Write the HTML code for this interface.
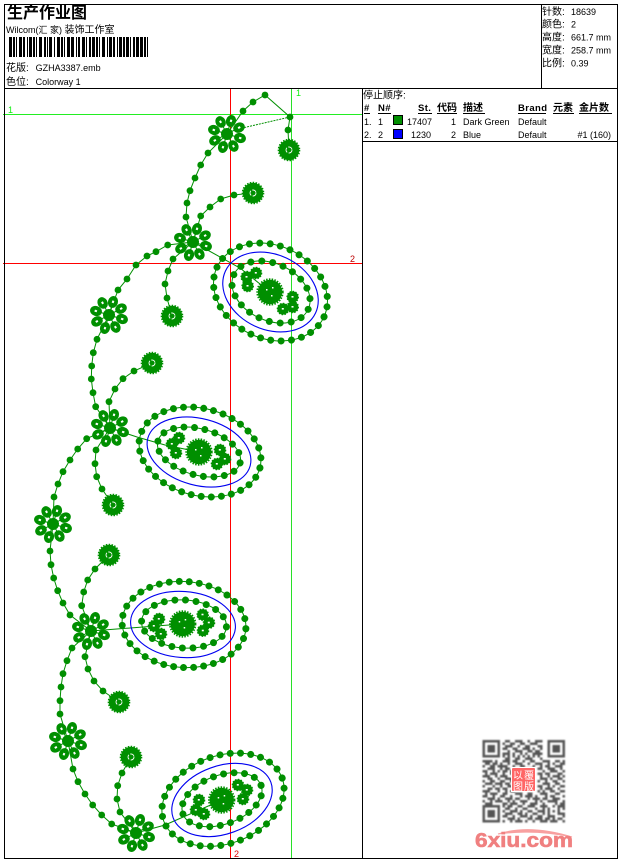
<!DOCTYPE html>
<html><head><meta charset="utf-8"><title>生产作业图</title>
<style>
html,body{margin:0;padding:0;background:#fff;width:620px;height:860px;overflow:hidden}
svg{display:block}
text{font-family:"Liberation Sans","WenQuanYi Zen Hei","Noto Sans CJK SC",sans-serif;font-size:9px;fill:#000}
.c{font-size:10px}
.b{font-weight:bold;font-size:10px}
.t{font-family:"Liberation Sans","Noto Sans CJK SC",sans-serif;font-size:16px;font-weight:bold}
.h{font-weight:bold;font-size:9.5px;letter-spacing:.4px}
</style></head><body>
<svg width="620" height="860" viewBox="0 0 620 860" xmlns="http://www.w3.org/2000/svg">
<defs>
<g id="d"><circle r="3.4" fill="#008f00"/></g>
<g id="bl"><circle r="5.6" fill="#008f00"/><circle r="5.8" fill="none" stroke="#008f00" stroke-width="1" stroke-dasharray="1.5 1.5"/><rect x="-1.2" y="-1" width="2" height="1.6" fill="#fff"/></g>
<g id="pm"><circle r="10.2" fill="#008f00"/><circle r="10.6" fill="none" stroke="#008f00" stroke-width="1.4" stroke-dasharray="1.5 1.4"/><circle r="3" fill="none" stroke="#fff" stroke-width=".9" stroke-dasharray="5 1.5"/></g>
<g id="cn"><circle r="12.2" fill="#008f00"/><circle r="12.8" fill="none" stroke="#008f00" stroke-width="1.8" stroke-dasharray="1.5 1.3"/><rect x="-4" y="-3" width="1.5" height="1.5" fill="#fff"/><rect x="2" y="-5" width="1.5" height="1.5" fill="#fff"/><rect x="1" y="3" width="1.5" height="1.5" fill="#fff"/></g>
<g id="p"><line x1="0" y1="0" x2="0" y2="-9" stroke="#008f00"/><ellipse cy="-13.6" rx="5" ry="6" fill="#008f00"/><rect x="-1" y="-15" width="2" height="2.4" fill="#fff"/></g>
<g id="f"><use href="#p" transform="rotate(17)"/><use href="#p" transform="rotate(62)"/><use href="#p" transform="rotate(107)"/><use href="#p" transform="rotate(152)"/><use href="#p" transform="rotate(197)"/><use href="#p" transform="rotate(242)"/><use href="#p" transform="rotate(287)"/><use href="#p" transform="rotate(332)"/><circle r="6" fill="#008f00"/></g>
<filter id="bq"><feGaussianBlur stdDeviation=".35"/></filter>
<filter id="bt"><feGaussianBlur stdDeviation=".3"/></filter>
</defs>

<!-- guides -->
<g shape-rendering="crispEdges">
<line x1="291.5" y1="89" x2="291.5" y2="858" stroke="#28e028"/>
<line x1="3" y1="114.5" x2="362" y2="114.5" stroke="#22ee22"/>
<line x1="3" y1="263.5" x2="362" y2="263.5" stroke="#f00"/>
<line x1="230.5" y1="89" x2="230.5" y2="858" stroke="#f00"/>
</g>
<text x="8" y="113" style="fill:#1e1">1</text>
<text x="296" y="96" style="fill:#1e1">1</text>
<text x="350" y="262" style="fill:#b00">2</text>
<text x="234" y="857" style="fill:#d00">2</text>

<!-- stems -->
<g fill="none" stroke="#008f00" stroke-width="1">
<path d="M227 134L208 153 200.7 165 195 178 190 190.7 187 203 186 217 193 242"/>
<path d="M193 242L200.7 216 210 207 220.7 199 234 195 252 193"/>
<path d="M193 242L167.7 245 156 251.7 147 256 136 265 127 279 118 290 109 315"/>
<path d="M193 242L173 259 168 271 165 284 167 298 172 316"/>
<path d="M227 134L243 111 253 102 265 95 290 117 288 130 289 150"/>
<path d="M290 117L238 129" stroke-dasharray="2 1"/>
<path d="M109 315L97 339.3 93.3 352.7 91.7 366 91.3 379 93 392.7 95.7 406.7 110 428"/>
<path d="M110 428L109 401.7 115 389 123 378.7 134 371 152 363"/>
<path d="M110 428L86.7 438.7 77.7 449 70 460 63 471.7 58 484 54 497 53 524"/>
<path d="M110 428L96 450 95 463.7 96.7 476.7 102 489 113 505"/>
<path d="M53 524L50 551 51 564.7 53.7 578 57.7 590.7 63 603 70 615 91 631"/>
<path d="M91 631L81.7 605.7 83.7 592 87.7 580 95 569 109 555"/>
<path d="M91 631L72 648 67 660.7 63 673.7 61 687 60 700.7 60 714 68 741"/>
<path d="M91 631L85 656.7 88 669 94 681 103 691 119 702"/>
<path d="M68 741L73 769 78 781.7 85 794 92.7 805 101.7 815 111.7 824 136 833"/>
<path d="M136 833L120 812 117 799 117.7 785.7 122 773 131 757"/>
<path d="M193 242L240 268 270 292"/>
<path d="M110 428L137 437 165 445 199 452"/>
<path d="M91 631L182 624"/>
<path d="M136 833L165 825 222 800"/>
</g>

<!-- ellipse rings -->
<g fill="none" stroke="#008f00" stroke-width="1">
<ellipse cx="270.5" cy="292" rx="59" ry="46.5" transform="rotate(25 270.5 292)"/>
<ellipse cx="271" cy="292" rx="41" ry="28.4" transform="rotate(25 271 292)"/>
<ellipse cx="200" cy="452" rx="62" ry="43.5" transform="rotate(15 200 452)"/>
<ellipse cx="199" cy="452" rx="42.5" ry="23.2" transform="rotate(15 199 452)"/>
<ellipse cx="184" cy="624.5" rx="62" ry="43" transform="rotate(4 184 624.5)"/>
<ellipse cx="184" cy="624" rx="42.5" ry="24" transform="rotate(4 184 624)"/>
<ellipse cx="223" cy="799.7" rx="63" ry="44" transform="rotate(-20 223 799.7)"/>
<ellipse cx="222" cy="799.7" rx="41.6" ry="24.4" transform="rotate(-20 222 799.7)"/>
</g>
<g fill="none" stroke="#008f00" stroke-width="7" stroke-linecap="round">
<ellipse pathLength="320" stroke-dasharray="0 10" cx="270.5" cy="292" rx="59" ry="46.5" transform="rotate(25 270.5 292)"/>
<ellipse pathLength="200" stroke-dasharray="0 10" cx="271" cy="292" rx="41" ry="28.4" transform="rotate(25 271 292)"/>
<ellipse pathLength="330" stroke-dasharray="0 10" cx="200" cy="452" rx="62" ry="43.5" transform="rotate(15 200 452)"/>
<ellipse pathLength="200" stroke-dasharray="0 10" cx="199" cy="452" rx="42.5" ry="23.2" transform="rotate(15 199 452)"/>
<ellipse pathLength="330" stroke-dasharray="0 10" cx="184" cy="624.5" rx="62" ry="43" transform="rotate(4 184 624.5)"/>
<ellipse pathLength="200" stroke-dasharray="0 10" cx="184" cy="624" rx="42.5" ry="24" transform="rotate(4 184 624)"/>
<ellipse pathLength="330" stroke-dasharray="0 10" cx="223" cy="799.7" rx="63" ry="44" transform="rotate(-20 223 799.7)"/>
<ellipse pathLength="200" stroke-dasharray="0 10" cx="222" cy="799.7" rx="41.6" ry="24.4" transform="rotate(-20 222 799.7)"/>
</g>

<!-- dots on stems -->
<g>
<use href="#d" x="265" y="95"/><use href="#d" x="253" y="102"/><use href="#d" x="243" y="111"/><use href="#d" x="290" y="117"/><use href="#d" x="288" y="130"/>
<use href="#d" x="208" y="153"/><use href="#d" x="200.7" y="165"/><use href="#d" x="195" y="178"/><use href="#d" x="190" y="190.7"/><use href="#d" x="187" y="203"/><use href="#d" x="186" y="217"/>
<use href="#d" x="200.7" y="216"/><use href="#d" x="210" y="207"/><use href="#d" x="220.7" y="199"/><use href="#d" x="234" y="195"/>
<use href="#d" x="167.7" y="245"/><use href="#d" x="156" y="251.7"/><use href="#d" x="147" y="256"/><use href="#d" x="136" y="265"/><use href="#d" x="127" y="279"/><use href="#d" x="118" y="290"/>
<use href="#d" x="173" y="259"/><use href="#d" x="168" y="271"/><use href="#d" x="165" y="284"/><use href="#d" x="167" y="298"/>
<use href="#d" x="97" y="339.3"/><use href="#d" x="93.3" y="352.7"/><use href="#d" x="91.7" y="366"/><use href="#d" x="91.3" y="379"/><use href="#d" x="93" y="392.7"/><use href="#d" x="95.7" y="406.7"/>
<use href="#d" x="109" y="401.7"/><use href="#d" x="115" y="389"/><use href="#d" x="123" y="378.7"/><use href="#d" x="134" y="371"/>
<use href="#d" x="86.7" y="438.7"/><use href="#d" x="77.7" y="449"/><use href="#d" x="70" y="460"/><use href="#d" x="63" y="471.7"/><use href="#d" x="58" y="484"/><use href="#d" x="54" y="497"/>
<use href="#d" x="96" y="450"/><use href="#d" x="95" y="463.7"/><use href="#d" x="96.7" y="476.7"/><use href="#d" x="102" y="489"/>
<use href="#d" x="50" y="551"/><use href="#d" x="51" y="564.7"/><use href="#d" x="53.7" y="578"/><use href="#d" x="57.7" y="590.7"/><use href="#d" x="63" y="603"/><use href="#d" x="70" y="615"/>
<use href="#d" x="81.7" y="605.7"/><use href="#d" x="83.7" y="592"/><use href="#d" x="87.7" y="580"/><use href="#d" x="95" y="569"/>
<use href="#d" x="72" y="648"/><use href="#d" x="67" y="660.7"/><use href="#d" x="63" y="673.7"/><use href="#d" x="61" y="687"/><use href="#d" x="60" y="700.7"/><use href="#d" x="60" y="714"/>
<use href="#d" x="85" y="656.7"/><use href="#d" x="88" y="669"/><use href="#d" x="94" y="681"/><use href="#d" x="103" y="691"/>
<use href="#d" x="73" y="769"/><use href="#d" x="78" y="781.7"/><use href="#d" x="85" y="794"/><use href="#d" x="92.7" y="805"/><use href="#d" x="101.7" y="815"/><use href="#d" x="111.7" y="824"/>
<use href="#d" x="120" y="812"/><use href="#d" x="117" y="799"/><use href="#d" x="117.7" y="785.7"/><use href="#d" x="122" y="773"/>
</g>

<!-- flowers -->
<use href="#f" transform="translate(227 134)"/>
<use href="#f" transform="translate(193 242)"/>
<use href="#f" transform="translate(109 315)"/>
<use href="#f" transform="translate(110 428)"/>
<use href="#f" transform="translate(53 524)"/>
<use href="#f" transform="translate(91 631)"/>
<use href="#f" transform="translate(68 741)"/>
<use href="#f" transform="translate(136 833)"/>

<!-- pom-poms -->
<use href="#pm" x="289" y="150"/><use href="#pm" x="253" y="193"/><use href="#pm" x="172" y="316"/><use href="#pm" x="152" y="363"/><use href="#pm" x="113" y="505"/><use href="#pm" x="109" y="555"/><use href="#pm" x="119" y="702"/><use href="#pm" x="131" y="757"/>

<!-- centres and blooms -->
<use href="#cn" x="270" y="292"/><use href="#cn" x="199" y="452"/><use href="#cn" x="182.7" y="624"/><use href="#cn" x="221.7" y="800"/>
<use href="#bl" x="246.7" y="277"/><use href="#bl" x="256" y="273"/><use href="#bl" x="247.7" y="286"/><use href="#bl" x="283" y="309"/><use href="#bl" x="292.7" y="297"/><use href="#bl" x="292.7" y="307"/>
<use href="#bl" x="179" y="438"/><use href="#bl" x="172" y="444"/><use href="#bl" x="176" y="453"/><use href="#bl" x="220" y="450"/><use href="#bl" x="225" y="459"/><use href="#bl" x="217" y="464"/>
<use href="#bl" x="159" y="619"/><use href="#bl" x="154" y="626"/><use href="#bl" x="161" y="634"/><use href="#bl" x="202.7" y="614.7"/><use href="#bl" x="209" y="622.7"/><use href="#bl" x="203" y="630.7"/>
<use href="#bl" x="199" y="800"/><use href="#bl" x="196" y="810"/><use href="#bl" x="204" y="814"/><use href="#bl" x="238" y="785"/><use href="#bl" x="247" y="790"/><use href="#bl" x="243" y="799"/>

<!-- blue ovals -->
<g fill="none" stroke="#0000f0" stroke-width="1.1">
<ellipse cx="270.5" cy="292" rx="49.7" ry="37.5" transform="rotate(25 270.5 292)"/>
<ellipse cx="199" cy="452" rx="53" ry="33.3" transform="rotate(15 199 452)"/>
<ellipse cx="183" cy="624.5" rx="52.5" ry="33" transform="rotate(4 183 624.5)"/>
<ellipse cx="222" cy="800" rx="52" ry="34" transform="rotate(-20 222 800)"/>
</g>

<!-- frame -->
<g stroke="#000" fill="none" shape-rendering="crispEdges">
<rect x="4.5" y="4.5" width="613" height="854"/>
<line x1="4" y1="88.5" x2="618" y2="88.5"/>
<line x1="541.5" y1="4" x2="541.5" y2="88"/>
<line x1="362.5" y1="88" x2="362.5" y2="859"/>
<line x1="362" y1="141.5" x2="618" y2="141.5"/>
</g>

<!-- header -->
<text class="t" x="7" y="18">生产作业图</text>
<text x="6" y="33">Wilcom(汇 家) <tspan class="c">装饰工作室</tspan></text>
<line x1="9" y1="47" x2="150" y2="47" stroke="#000" stroke-width="20" stroke-dasharray="3 1 2 1 1 2 3 1 2 2 1 1 3 1 2 1 1 2 3 2 2 1 1 1 3 2 1 2 3 1 2 1 1 2 3 1 3 2 1 1 2 2 3 1 1 2 2 1 3 1 2 1 1 2 3 2 1 1 3 1 2 2 1 1 3 1 2 1 3 1 1 2 2 1 3 1" shape-rendering="crispEdges"/>
<text class="c" x="6" y="71">花版:</text><text x="35.6" y="71">GZHA3387.emb</text>
<text class="c" x="6" y="85">色位:</text><text x="35.6" y="85">Colorway 1</text>

<!-- right info -->
<text class="c" x="542" y="15">针数:</text><text x="571" y="15">18639</text>
<text class="c" x="542" y="27.5">颜色:</text><text x="571" y="27.5">2</text>
<text class="c" x="542" y="40.5">高度:</text><text x="571" y="40.5">661.7 mm</text>
<text class="c" x="542" y="53.5">宽度:</text><text x="571" y="53.5">258.7 mm</text>
<text class="c" x="542" y="66.5">比例:</text><text x="571" y="66.5">0.39</text>

<!-- table -->
<text class="c" x="363" y="98.5">停止顺序:</text>
<text class="h" x="364" y="111">#</text>
<text class="h" x="378" y="111">N#</text>
<text class="h" x="418" y="111">St.</text>
<text class="b" x="437" y="111">代码</text>
<text class="b" x="463" y="111">描述</text>
<text class="h" x="518" y="111">Brand</text>
<text class="b" x="553" y="111">元素</text>
<text class="b" x="579" y="111">金片数</text>
<g stroke="#000" shape-rendering="crispEdges">
<line x1="364" x2="370" y1="113.5" y2="113.5"/><line x1="378" x2="391" y1="113.5" y2="113.5"/><line x1="418" x2="432" y1="113.5" y2="113.5"/><line x1="437" x2="457" y1="113.5" y2="113.5"/><line x1="463" x2="485" y1="113.5" y2="113.5"/><line x1="518" x2="546" y1="113.5" y2="113.5"/><line x1="553" x2="574" y1="113.5" y2="113.5"/><line x1="579" x2="612" y1="113.5" y2="113.5"/>
<rect x="393.5" y="115.5" width="9" height="9" fill="#008f00"/>
<rect x="393.5" y="129.5" width="9" height="9" fill="#0000ff"/>
</g>
<text x="364" y="125">1.</text><text x="378" y="125">1</text><text x="432" y="125" text-anchor="end">17407</text><text x="456" y="125" text-anchor="end">1</text><text x="463" y="125">Dark Green</text><text x="518" y="125">Default</text>
<text x="364" y="138">2.</text><text x="378" y="138">2</text><text x="431" y="138" text-anchor="end">1230</text><text x="456" y="138" text-anchor="end">2</text><text x="463" y="138">Blue</text><text x="518" y="138">Default</text><text x="611" y="138" text-anchor="end">#1 (160)</text>

<!-- QR -->
<g transform="translate(482.5 740) scale(2.5)" filter="url(#bq)">
<g fill="none" stroke="#555" stroke-width="1">
<rect x=".5" y=".5" width="6" height="6"/><rect x="26.5" y=".5" width="6" height="6"/><rect x=".5" y="26.5" width="6" height="6"/>
<path d="M9 .5h2M13 .5h3M18 .5h1M21 .5h3M8 1.5h1M11 1.5h2M15 1.5h2M19 1.5h3M9 2.5h3M14 2.5h1M17 2.5h2M22 2.5h2M8 3.5h2M12 3.5h2M16 3.5h3M20 3.5h1M23 3.5h1M10 4.5h1M13 4.5h3M18 4.5h2M21 4.5h2M8 5.5h3M12 5.5h1M15 5.5h1M17 5.5h1M20 5.5h4M8 6.5h1M10 6.5h1M12 6.5h1M14 6.5h1M16 6.5h1M18 6.5h1M20 6.5h1M22 6.5h1M9 7.5h2M13 7.5h2M17 7.5h3M23 7.5h1"/>
<path d="M0 8.5h4M5 8.5h1M8 8.5h3M12 8.5h2M16 8.5h1M19 8.5h2M24 8.5h3M29 8.5h2M32 8.5h1M1 9.5h2M4 9.5h2M7 9.5h1M10 9.5h1M13 9.5h3M18 9.5h1M21 9.5h3M26 9.5h1M28 9.5h1M31 9.5h2M0 10.5h1M3 10.5h2M6 10.5h4M12 10.5h1M15 10.5h2M20 10.5h1M23 10.5h1M25 10.5h2M29 10.5h3M2 11.5h3M7 11.5h1M9 11.5h2M13 11.5h2M17 11.5h3M22 11.5h2M26 11.5h3M31 11.5h1M0 12.5h2M4 12.5h1M6 12.5h1M8 12.5h2M11 12.5h1M14 12.5h1M18 12.5h1M24 12.5h1M27 12.5h3M32 12.5h1M1 13.5h1M3 13.5h3M8 13.5h1M11 13.5h2M22 13.5h2M25 13.5h2M30 13.5h2M0 14.5h3M5 14.5h1M7 14.5h3M12 14.5h1M23 14.5h1M26 14.5h1M28 14.5h3M32 14.5h1M2 15.5h2M6 15.5h1M9 15.5h3M23 15.5h3M27 15.5h1M30 15.5h2M0 16.5h1M3 16.5h2M7 16.5h2M11 16.5h1M22 16.5h1M25 16.5h1M28 16.5h2M32 16.5h1M1 17.5h3M5 17.5h3M9 17.5h2M24 17.5h3M29 17.5h2M0 18.5h1M4 18.5h1M7 18.5h1M10 18.5h2M22 18.5h2M26 18.5h1M28 18.5h1M31 18.5h2M2 19.5h2M5 19.5h2M8 19.5h2M12 19.5h1M23 19.5h1M25 19.5h3M30 19.5h1M0 20.5h3M6 20.5h1M9 20.5h1M11 20.5h2M22 20.5h1M24 20.5h1M27 20.5h2M31 20.5h2M1 21.5h1M3 21.5h3M8 21.5h2M13 21.5h3M18 21.5h2M23 21.5h3M29 21.5h2M0 22.5h2M4 22.5h1M7 22.5h2M11 22.5h1M15 22.5h1M17 22.5h3M21 22.5h1M25 22.5h1M27 22.5h2M32 22.5h1M2 23.5h3M6 23.5h1M9 23.5h3M13 23.5h2M18 23.5h1M20 23.5h3M24 23.5h2M28 23.5h3M0 24.5h1M3 24.5h1M5 24.5h3M10 24.5h1M12 24.5h1M15 24.5h3M21 24.5h1M23 24.5h1M26 24.5h4M32 24.5h1M1 25.5h3M8 25.5h2M11 25.5h3M16 25.5h1M19 25.5h3M24 25.5h1M29 25.5h1M31 25.5h2"/>
<path d="M8 26.5h1M10 26.5h2M14 26.5h2M18 26.5h3M23 26.5h3M28 26.5h1M30 26.5h3M9 27.5h2M13 27.5h1M16 27.5h2M21 27.5h1M24 27.5h1M26 27.5h1M30 27.5h1M32 27.5h1M8 28.5h1M11 28.5h3M15 28.5h1M18 28.5h2M22 28.5h3M26 28.5h1M28 28.5h1M30 28.5h1M9 29.5h3M14 29.5h2M17 29.5h1M20 29.5h2M24 29.5h1M26 29.5h1M30 29.5h3M8 30.5h2M12 30.5h1M15 30.5h3M19 30.5h1M22 30.5h2M26 30.5h3M32 30.5h1M10 31.5h3M14 31.5h1M18 31.5h2M21 31.5h3M25 31.5h2M28 31.5h1M30 31.5h2M8 32.5h1M11 32.5h1M13 32.5h3M17 32.5h1M20 32.5h1M23 32.5h3M27 32.5h3M32 32.5h1"/>
</g>
<g fill="#555"><rect x="2" y="2" width="3" height="3"/><rect x="28" y="2" width="3" height="3"/><rect x="2" y="28" width="3" height="3"/></g>
</g>
<rect x="511" y="767" width="25" height="25" fill="#fff"/>
<rect x="512" y="768" width="23" height="23" rx="1" fill="#f66"/>
<g text-anchor="middle">
<text x="518" y="779" style="font-size:10px;fill:#fff">以</text><text x="529" y="779" style="font-size:10px;fill:#fff">覆</text>
<text x="518" y="790" style="font-size:10px;fill:#fff">图</text><text x="529" y="790" style="font-size:10px;fill:#fff">版</text>
</g>

<!-- 6xiu.com -->
<path d="M498 834Q530 824 572 837Q535 829 498 834z" fill="#f8a0a0" stroke="#f8a0a0" stroke-width="1" filter="url(#bt)"/>
<text x="475" y="847" style="font-size:20px;font-weight:bold;fill:#f08080;stroke:#f08080;stroke-width:.6" textLength="98" lengthAdjust="spacingAndGlyphs" filter="url(#bt)">6xiu.com</text>
</svg>
</body></html>
